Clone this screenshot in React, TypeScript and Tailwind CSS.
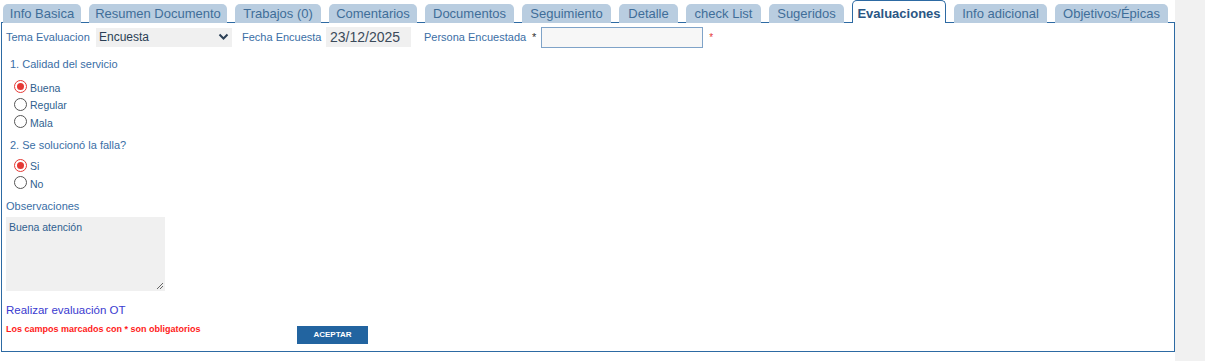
import React from 'react';

const tabs = [
  { label: 'Info Basica', w: 'w-[78px]' },
  { label: 'Resumen Documento', w: 'w-[138px]' },
  { label: 'Trabajos (0)', w: 'w-[86px]' },
  { label: 'Comentarios', w: 'w-[88px]' },
  { label: 'Documentos', w: 'w-[89px]' },
  { label: 'Seguimiento', w: 'w-[89px]' },
  { label: 'Detalle', w: 'w-[59px]' },
  { label: 'check List', w: 'w-[75px]' },
  { label: 'Sugeridos', w: 'w-[75px]' },
  { label: 'Evaluaciones', w: 'w-[94px]', active: true },
  { label: 'Info adicional', w: 'w-[93px]' },
  { label: 'Objetivos/Épicas', w: 'w-[113px]' },
];

function Radio({ label, checked }: { label: string; checked?: boolean }) {
  return (
    <div className="flex items-center h-[17.5px] gap-[3px]">
      {checked ? (
        <span className="w-[13px] h-[13px] rounded-full border-[1.5px] border-[#e53935] bg-white flex items-center justify-center">
          <span className="w-[7px] h-[7px] rounded-full bg-[#e53935]" />
        </span>
      ) : (
        <span className="w-[13px] h-[13px] rounded-full border border-[#555] bg-white" />
      )}
      <span className="text-[10.5px] text-[#2f5f8f] mt-[4px]">{label}</span>
    </div>
  );
}

export default function App() {
  return (
    <div className="w-[1205px] h-[361px] bg-[#f1f1f1] flex font-['Liberation_Sans',Arial,sans-serif]">
      <div className="w-[1175px] h-full bg-white">
        {/* Tabs */}
        <div className="flex items-end gap-2 pl-[3px] h-[23px] relative z-10">
          {tabs.map((t) =>
          t.active ?
          <div
            key={t.label}
            className={`${t.w} h-[23px] bg-white border border-b-0 border-[#2d6aa3] rounded-t-[5px] flex items-start justify-center pt-[3px] text-[13px] font-bold text-[#2a5684]`}>
                {t.label}
              </div> :
          <div
            key={t.label}
            className={`${t.w} h-[19px] bg-[#b9cde0] rounded-t-[5px] flex items-center justify-center text-[13px] text-[#3f6d99]`}>
                {t.label}
              </div>
          )}
        </div>

        {/* Panel */}
        <div className="ml-px w-[1174px] h-[330px] -mt-px border border-[#2d6aa3] bg-white text-[11px] text-[#3a6ea5]">
          <div className="flex items-center h-[26px] mt-[1px] pl-[4px]">
            <span className="w-[86px]">Tema Evaluacion</span>
            <div className="ml-[4px] w-[136px] h-[19px] bg-[#f0f0f0] flex items-center justify-between px-[3px] text-[#2b3f55] text-[12px]">
              <span>Encuesta</span>
              <svg width="11" height="8" viewBox="0 0 11 8">
                <path d="M1.5 1.5 L5.5 5.5 L9.5 1.5" stroke="#2b3f55" strokeWidth="2" fill="none" />
              </svg>
            </div>
            <span className="ml-[10px] w-[80px]">Fecha Encuesta</span>
            <div className="ml-[4px] w-[85px] h-[20px] bg-[#f0f0f0] flex items-center px-[4px] text-[14px] text-[#3b4a5a]">
              23/12/2025
            </div>
            <span className="ml-[13px] w-[104px]">Persona Encuestada</span>
            <span className="ml-[4px] text-[#333]">*</span>
            <div className="ml-[5px] w-[162px] h-[21px] border border-[#7fa3c8] bg-[#f7f7f7]" />
            <span className="ml-[6px] text-[#e53935] text-[10px]">*</span>
          </div>

          <div className="pl-[8px] mt-[7px] leading-[14px]">1. Calidad del servicio</div>
          <div className="pl-[12px] mt-[7px] flex flex-col">
            <Radio label="Buena" checked />
            <Radio label="Regular" />
            <Radio label="Mala" />
          </div>

          <div className="pl-[8px] mt-[7px] leading-[14px]">2. Se solucionó la falla?</div>
          <div className="pl-[12px] mt-[5px] flex flex-col">
            <Radio label="Si" checked />
            <Radio label="No" />
          </div>

          <div className="pl-[4px] mt-[7px] leading-[14px]">Observaciones</div>
          <div className="ml-[4px] mt-[4px] w-[159px] h-[74px] bg-[#f0f0f0] relative px-[3px] pt-[3px] text-[10.5px] text-[#2f5f8f]">
            Buena atención
            <svg className="absolute right-[1px] bottom-[1px]" width="8" height="8" viewBox="0 0 8 8">
              <path d="M7 1 L1 7 M7 4 L4 7" stroke="#666" strokeWidth="1" />
            </svg>
          </div>

          <div className="pl-[4px] mt-[12px] text-[11.5px] text-[#3a3ad0] leading-[14px]">Realizar evaluación OT</div>
          <div className="flex items-start mt-[8px]">
            <span className="pl-[4px] text-[9px] leading-none font-bold text-[#ff1a1a] w-[295px]">
              Los campos marcados con * son obligatorios
            </span>
            <button className="w-[71px] h-[18px] bg-[#2264a0] text-white text-[8px] font-bold mt-[1px]">
              ACEPTAR
            </button>
          </div>
        </div>
      </div>
    </div>);

}
